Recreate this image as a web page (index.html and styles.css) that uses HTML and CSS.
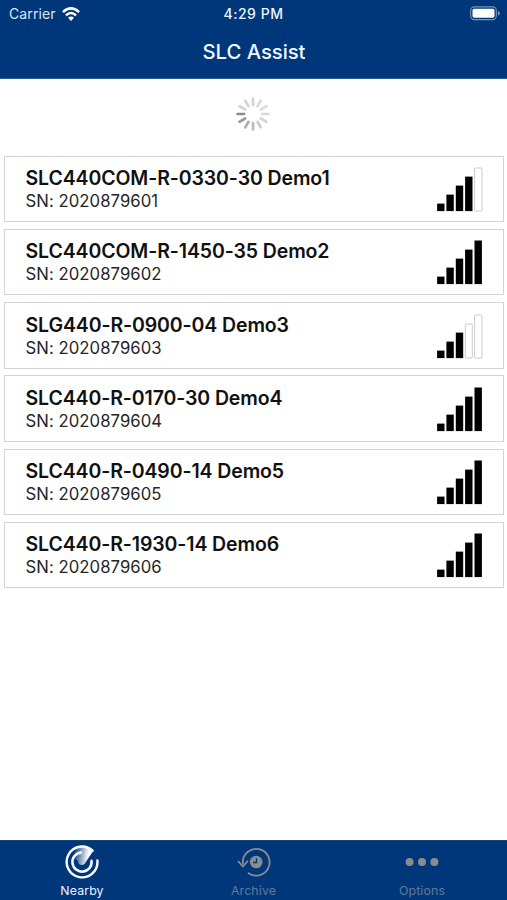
FILE: index.html
```html
<!DOCTYPE html>
<html lang="en">
<head>
<meta charset="utf-8">
<title>SLC Assist</title>
<link rel="stylesheet" href="styles.css">
</head>
<body>
<svg class="defs" width="0" height="0" aria-hidden="true">
  <symbol id="bars" viewBox="0 0 48 46">
    <rect x="1.1" y="37.6" width="7.4" height="7.5"/>
    <rect x="10.4" y="28.6" width="7.4" height="16.5"/>
    <rect x="19.8" y="19.6" width="7.4" height="25.5"/>
  </symbol>
  <symbol id="signal5" viewBox="0 0 48 46">
    <use href="#bars" width="48" height="46"/>
    <rect x="29.1" y="10.6" width="7.4" height="34.5"/>
    <rect x="38.5" y="1.5" width="7.4" height="43.6"/>
  </symbol>
  <symbol id="signal4" viewBox="0 0 48 46">
    <use href="#bars" width="48" height="46"/>
    <rect x="29.1" y="10.6" width="7.4" height="34.5"/>
    <rect class="empty" x="38.6" y="2" width="7.4" height="43" rx="1"/>
  </symbol>
  <symbol id="signal3" viewBox="0 0 48 46">
    <use href="#bars" width="48" height="46"/>
    <rect class="empty" x="29.3" y="11" width="7" height="34" rx="1"/>
    <rect class="empty" x="38.6" y="2" width="7.4" height="43" rx="1"/>
  </symbol>
</svg>
<div class="app">
  <header class="header">
    <div class="status">
      <div class="carrier"><span>Carrier</span>
        <svg class="wifi" viewBox="0 0 18 14"><g fill="none" stroke="#fff" stroke-width="2.5"><path d="M.9 5.1Q9-2.3 17.1 5.1"/><path d="M3.9 8.3Q9 3.6 14.1 8.3"/></g><path fill="#fff" d="M6 10.8Q9 8.2 12 10.8L9 13.9Z"/></svg>
      </div>
      <div class="time">4:29 PM</div>
      <div class="power">
        <svg class="battery" viewBox="0 0 31 15"><rect x=".7" y=".9" width="25.6" height="12.7" rx="3.6" fill="none" stroke="#7894bb" stroke-width="1.1"/><rect x="2.5" y="2.7" width="22" height="9.1" rx="1.8" fill="#fff"/><path d="M27.8 4.9Q30 5.6 30 7.2T27.8 9.6Z" fill="#7894bb"/></svg>
      </div>
    </div>
    <h1 class="title">SLC Assist</h1>
  </header>
  <main class="content">
    <div class="loading">
      <svg class="spinner" viewBox="-18 -18 36 36"><g stroke-width="2.7" stroke-linecap="round">
        <path d="M0-9V-15.5" stroke="#d3d3d3"/>
        <path d="M0-9V-15.5" stroke="#d9d9d9" transform="rotate(30)"/>
        <path d="M0-9V-15.5" stroke="#dcdcdc" transform="rotate(60)"/>
        <path d="M0-9V-15.5" stroke="#d8d8d8" transform="rotate(90)"/>
        <path d="M0-9V-15.5" stroke="#d4d4d4" transform="rotate(120)"/>
        <path d="M0-9V-15.5" stroke="#c9c9c9" transform="rotate(150)"/>
        <path d="M0-9V-15.5" stroke="#bbb" transform="rotate(180)"/>
        <path d="M0-9V-15.5" stroke="#adadad" transform="rotate(210)"/>
        <path d="M0-9V-15.5" stroke="#9e9e9e" transform="rotate(240)"/>
        <path d="M0-9V-15.5" stroke="#8c8c8c" transform="rotate(270)"/>
        <path d="M0-9V-15.5" stroke="#d5d5d5" transform="rotate(300)"/>
        <path d="M0-9V-15.5" stroke="#d5d5d5" transform="rotate(330)"/>
      </g></svg>
    </div>
    <ul class="devices">
      <li class="device"><div class="info"><h2 class="name">SLC440COM-R-0330-30 Demo1</h2><p class="serial">SN: 2020879601</p></div><svg class="signal"><use href="#signal4"/></svg></li>
      <li class="device"><div class="info"><h2 class="name">SLC440COM-R-1450-35 Demo2</h2><p class="serial">SN: 2020879602</p></div><svg class="signal"><use href="#signal5"/></svg></li>
      <li class="device"><div class="info"><h2 class="name">SLG440-R-0900-04 Demo3</h2><p class="serial">SN: 2020879603</p></div><svg class="signal"><use href="#signal3"/></svg></li>
      <li class="device"><div class="info"><h2 class="name">SLC440-R-0170-30 Demo4</h2><p class="serial">SN: 2020879604</p></div><svg class="signal"><use href="#signal5"/></svg></li>
      <li class="device"><div class="info"><h2 class="name">SLC440-R-0490-14 Demo5</h2><p class="serial">SN: 2020879605</p></div><svg class="signal"><use href="#signal5"/></svg></li>
      <li class="device"><div class="info"><h2 class="name">SLC440-R-1930-14 Demo6</h2><p class="serial">SN: 2020879606</p></div><svg class="signal"><use href="#signal5"/></svg></li>
    </ul>
  </main>
  <nav class="tabs">
    <a class="tab active">
      <svg class="tab-icon" viewBox="-18 -18 36 36">
        <defs><linearGradient id="sweep" x1="0" y1=".4" x2="1" y2=".5"><stop offset="0" stop-color="#fff" stop-opacity="0"/><stop offset=".75" stop-color="#fff"/></linearGradient></defs>
        <path d="M0 3Q-4 3-4-1L-9-5Q-8-11-4-15Q4-17 11.5-11.5L2.5 2Q1.5 3 0 3Z" fill="url(#sweep)"/>
        <g fill="none" stroke="#fff" stroke-linecap="round"><path d="M10.6-11.3A15.4 15.4 0 1 0 15.4-1.5" stroke-width="2.4"/><path d="M-1-9.5A9.6 9.6 0 1 0 9.5-1.2" stroke-width="2.5"/></g>
      </svg>
      <span>Nearby</span>
    </a>
    <a class="tab archive">
      <svg class="tab-icon" viewBox="-18 -18 36 36"><g fill="none" stroke="currentColor" stroke-width="1.8" stroke-linecap="round" stroke-linejoin="round"><path d="M-11.2 1.5V0A13.4 13.4 0 1 1-5.5 11.2"/><path d="M-15.5-.3L-11.2 4.5L-6.5-.7"/></g><circle cx="2.2" cy="0" r="6.3" fill="currentColor"/><path d="M2.5-3.8V.5H-1" fill="none" stroke="#00377b" stroke-width="1.3"/></svg>
      <span>Archive</span>
    </a>
    <a class="tab options">
      <svg class="tab-icon" viewBox="-18 -18 36 36" fill="currentColor"><circle cx="-12.4" r="4"/><circle r="4"/><circle cx="12.4" r="4"/></svg>
      <span>Options</span>
    </a>
  </nav>
</div>
</body>
</html>
```
FILE: styles.css
```css
* { box-sizing: border-box; }
body { margin: 0; background: #fff; font-family: Inter, "Liberation Sans", sans-serif; }
h1, h2, p, ul { margin: 0; padding: 0; }
.defs { position: absolute; }
.app { width: 507px; height: 900px; display: flex; flex-direction: column; overflow: hidden; }
.header { height: 79px; background: #00377b; color: #fff; border-bottom: 1px solid #285a94; }
.status { height: 26px; display: grid; grid-template-columns: 1fr auto 1fr; align-items: center; padding-top: 1px; }
.carrier { display: flex; align-items: center; gap: 6px; padding-left: 9px; font-size: 14px; color: #dce6f2; letter-spacing: .1px; }
.wifi { width: 18px; height: 14px; }
.time { font-size: 14px; font-weight: 500; letter-spacing: .5px; color: #edf3fa; }
.power { display: flex; justify-content: flex-end; padding-right: 6px; }
.battery { width: 31px; height: 15px; }
.title { font-size: 20.3px; line-height: 26px; font-weight: 550; text-align: center; padding-top: 13px; padding-left: 1px; color: #f2f7ff; letter-spacing: -.05px; }
.content { flex: 1; }
.loading { height: 76.5px; display: flex; justify-content: center; padding: 17px 2px 0 0; }
.spinner { width: 36px; height: 36px; }
.devices { list-style: none; display: flex; flex-direction: column; gap: 6.8px; padding: 0 3px 0 4px; }
.device { height: 66.5px; display: flex; justify-content: space-between; border: 1px solid #d4d4d4; padding: 9.5px 19px 0 20.5px; }
.info { padding-top: 1px; }
.name { font-size: 19.5px; line-height: 23px; font-weight: 600; color: #111; white-space: nowrap; letter-spacing: -.11px; }
.serial { font-size: 16.7px; line-height: 22px; color: #252525; letter-spacing: .06px; }
.signal { width: 48px; height: 46px; }
.empty { fill: #fff; stroke: #ccc; stroke-width: 1; }
.tabs { height: 60px; background: #00377b; border-top: 1px solid #14437a; display: flex; justify-content: space-between; padding: 3px 49px 0 46px; }
.tab { width: 72px; display: flex; flex-direction: column; align-items: center; gap: 3px; color: #8b8c8e; font-size: 12.3px; line-height: 16px; letter-spacing: .15px; }
.archive { position: relative; left: 1.5px; }
.tab span { color: #62799a; }
.tab.active span { color: #edf3fa; }
.tab-icon { width: 36px; height: 36px; }
```
